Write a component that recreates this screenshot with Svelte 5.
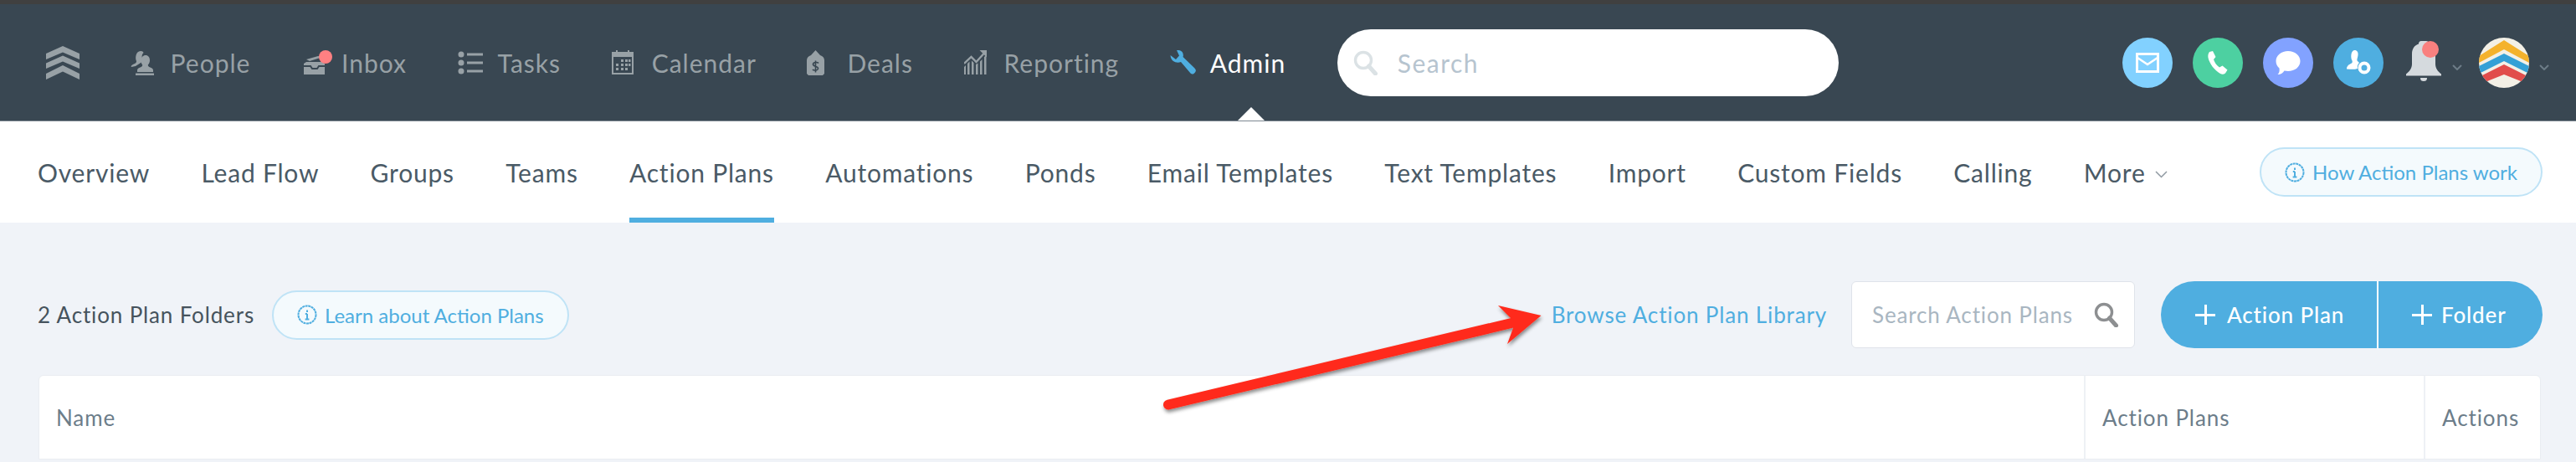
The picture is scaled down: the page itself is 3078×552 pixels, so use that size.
<script>
  const navItems = [
    { id: "people", label: "People" },
    { id: "inbox", label: "Inbox" },
    { id: "tasks", label: "Tasks" },
    { id: "calendar", label: "Calendar" },
    { id: "deals", label: "Deals" },
    { id: "reporting", label: "Reporting" },
    { id: "admin", label: "Admin", active: true },
  ];
  const subItems = [
    "Overview",
    "Lead Flow",
    "Groups",
    "Teams",
    "Action Plans",
    "Automations",
    "Ponds",
    "Email Templates",
    "Text Templates",
    "Import",
    "Custom Fields",
    "Calling",
  ];
</script>

{#snippet info()}
  <svg class="info" viewBox="0 0 24 24" fill="none" stroke="currentColor">
    <circle cx="12" cy="12" r="10.5" stroke-width="2" stroke-dasharray="3 0.6" />
    <path d="M12 6.5v2.4M12 11v6.5M9.8 11H12M9.6 17.5h4.8" stroke-width="2" />
  </svg>
{/snippet}

{#snippet glass(color)}
  <svg viewBox="0 0 30 30" fill="none" stroke={color}>
    <circle cx="12" cy="12" r="9.5" stroke-width="3.4" />
    <path d="M18.5 19l8 9" stroke-width="5" stroke-linecap="round" />
  </svg>
{/snippet}

<div class="page">
  <div class="strip"></div>

  <header class="topnav">
    <svg class="logo" viewBox="0 0 40 40" fill="#98a1a6">
      <path d="M20 0l20 9v7L20 7.500 0 16V9z" />
      <path d="M20 11.500l20 9v6.500L20 18.500 0 27v-6.500z" />
      <path d="M20 23l20 10v7L20 30.500 0 40v-7z" />
    </svg>

    {#each navItems as item}
      <div class="nav-item" class:active={item.active}>
        <span class="nav-icon">
          {#if item.id === "people"}
            <svg width="28" height="30" viewBox="0 0 28 30" fill="#98a1a6">
              <path d="M9 2c3-2 6-1 6.500 1-2 1.500-2.500 5-1.500 8 .3 1.500 0 2.500-1 3.500L6 19l-5 1c-1-1 1-3 4-4 1.500-.6 2-1.500 2-3-1.500-3-1-8.500 2-11z" />
              <path d="M18 6c3 0 5 2.500 5 6 0 2.500-1 4.500-2.200 5.500 0 1.500.7 2.300 2.700 3 2.500.8 3.500 2 3.500 3.500v2H8v-2c0-1.500 1-2.700 3.500-3.500 2-.7 2.700-1.500 2.700-3C13 16.500 12.500 14.500 12.500 12c0-3.500 2.500-6 5.500-6z" />
              <rect x="6" y="27.500" width="22" height="2.500" />
            </svg>
          {:else if item.id === "inbox"}
            <svg width="40" height="32" viewBox="0 0 40 32">
              <path d="M6 12l14-4 6 1-16 5z M3 17l3-2h19l3 2v13H3z" fill="#98a1a6" />
              <path d="M3 20h8l2 3h6l2-3h7" stroke="#394752" stroke-width="2" fill="none" />
              <circle cx="29" cy="9" r="8" fill="#ff8082" />
            </svg>
          {:else if item.id === "tasks"}
            <svg width="30" height="28" viewBox="0 0 30 28" fill="#98a1a6">
              <circle cx="4" cy="4" r="3.500" />
              <circle cx="4" cy="14" r="3.500" />
              <circle cx="4" cy="24" r="3.500" />
              <rect x="11" y="2.500" width="19" height="3" />
              <rect x="11" y="12.500" width="19" height="3" />
              <rect x="11" y="22.500" width="19" height="3" />
            </svg>
          {:else if item.id === "calendar"}
            <svg width="26" height="29" viewBox="0 0 26 29">
              <path d="M0 2h5V0h2v2h12V0h2v2h5v27H0z" fill="#98a1a6" />
              <rect x="2" y="8" width="22" height="19" fill="#394752" />
              <path d="M11 11h3v3h-3zM16 11h3v3h-3zM20 11h2.500v3H20zM5 16h3v3H5zM11 16h3v3h-3zM16 16h3v3h-3zM20 16h2.500v3H20zM5 21h3v3H5zM11 21h3v3h-3zM16 21h3v3h-3z" fill="#98a1a6" />
            </svg>
          {:else if item.id === "deals"}
            <svg width="21" height="30" viewBox="0 0 21 30">
              <path d="M10.500 0L16 6c3 1 5 3 5 6v16l-2 2H2l-2-2V12c0-3 2-5 5-6z" fill="#98a1a6" />
              <path d="M14 15.500c-1-1.500-6-1.500-6.500 1-.5 3.500 6.500 2 6 5.500-.4 2.500-5.500 2.500-6.500 1M10.500 12.500v14" stroke="#394752" stroke-width="1.600" fill="none" />
            </svg>
          {:else if item.id === "reporting"}
            <svg width="27" height="29" viewBox="0 0 27 29" fill="#98a1a6">
              <path d="M0 20l2-2v11H0zM4 16l2.500-2.500V29H4zM9 12.500l2.500 2.500v14H9zM14 17l2.500-1.500V29H14zM19 13.500l2.500-2.500v18H19zM24 8l2.500-2v23H24z" />
              <path d="M0 16L8.500 8l6 6L23.500 4" stroke="#98a1a6" stroke-width="2.400" fill="none" />
              <path d="M18.500 0H27v8.500z" />
            </svg>
          {:else}
            <svg width="31" height="29" viewBox="0 0 31 29" fill="#4faee0">
              <path d="M8 0c5.500-1 9 3.500 7.500 8L29 21c2 2 2.500 3.500 1 5.500s-3.500 3-5.500 1L13 14c-4.500 2-12 0-12.500-8L7 11l4-4.500z" />
            </svg>
          {/if}
        </span>
        <span>{item.label}</span>
      </div>
    {/each}

    <div class="global-search">
      <span class="global-glass">{@render glass("#dbe2e5")}</span>
      <span>Search</span>
    </div>

    <div class="nav-right">
      <span class="circle mail">
        <svg width="28" height="24" viewBox="0 0 28 24" fill="none" stroke="#fff" stroke-width="3">
          <rect x="1.500" y="1.500" width="25" height="21" />
          <path d="M2 6l12 8 12-8" stroke-width="2.500" />
        </svg>
      </span>
      <span class="circle phone">
        <svg width="26" height="28" viewBox="0 0 26 28" fill="#fff">
          <path d="M3 1l4-1 3.500 7-2.500 3c1 3.500 3.500 7 7 9.500l3.500-2 6 5-2.500 4c-2 1.500-4 1.500-6 .5C9 23 3 15 1.500 8 1 5 1.500 3 3 1z" />
        </svg>
      </span>
      <span class="circle chat">
        <svg width="30" height="30" viewBox="0 0 30 30" fill="#fff">
          <path d="M15 1c8 0 14.500 5 14.500 12S23 25 15 25c-1.500 0-3-.2-4.500-.5C9 27 6.500 29 2.500 29c2-2 2.500-4.500 2-7.500C2 19.500.5 16.500.5 13 .5 6 7 1 15 1z" />
        </svg>
      </span>
      <span class="circle admin-dot">
        <svg width="30" height="30" viewBox="0 0 30 30" fill="#fff">
          <path d="M10.500 0c3 0 4.500 2.500 4 6-.3 3-1.500 4.500-1 6.500L16 15c-2 2-2.500 4.500-2 7-3 1-7 1-13 .5 0-4 3-5.500 6-7 1-1 1-2.500 0-4C5.500 7 6.500 0 10.500 0z" />
          <circle cx="22" cy="21" r="5.500" fill="none" stroke="#fff" stroke-width="4" />
        </svg>
      </span>
      <span class="bell">
        <svg width="48" height="48" viewBox="0 0 48 48">
          <path d="M24 0c2 0 3 1.500 3 3.500 5 1.500 8 6 8 12v12c0 5 3 9 7 12v2H0v-2c4-3 7-7 7-12V15.500c0-6 3-10.500 8-12C15 1.500 16 0 18 0z" transform="translate(3 0)" fill="#d5dade" />
          <path d="M20 44h8c0 3-1.500 4-4 4s-4-1-4-4z" fill="#d5dade" />
          <circle cx="32" cy="10" r="10" fill="#f9807f" />
        </svg>
      </span>
      <svg class="caret bell-caret" viewBox="0 0 12 7" fill="none" stroke="#6d7c87" stroke-width="2">
        <path d="M1 1l5 5 5-5" />
      </svg>
      <span class="avatar">
        <svg width="60" height="60" viewBox="0 0 60 60">
          <rect width="60" height="60" fill="#f3f0e6" />
          <path d="M0 22L30 3l30 19v8L30 14 0 30z" fill="#f4b22c" />
          <path d="M0 34L30 19l30 15v9L30 28 0 43z" fill="#33a0d6" />
          <path d="M0 47L30 32l30 15v9L30 44 0 56z" fill="#e14d4b" />
        </svg>
      </span>
      <svg class="caret" viewBox="0 0 12 7" fill="none" stroke="#6d7c87" stroke-width="2">
        <path d="M1 1l5 5 5-5" />
      </svg>
    </div>
  </header>

  <nav class="subnav">
    {#each subItems as item}
      <div class="sub-item" class:current={item === "Action Plans"}>{item}</div>
    {/each}
    <div class="sub-item more">
      More
      <svg viewBox="0 0 15 9" fill="none" stroke="#8f99a1" stroke-width="1.500">
        <path d="M1 1l6.500 6.500L14 1" />
      </svg>
    </div>
    <div class="pill how">{@render info()}How Action Plans work</div>
  </nav>

  <main class="content">
    <div class="toolbar">
      <span class="count">2 Action Plan Folders</span>
      <div class="pill learn">{@render info()}Learn about Action Plans</div>
      <span class="browse">Browse Action Plan Library</span>
      <div class="plan-search">
        <span>Search Action Plans</span>
        <span class="plan-glass">{@render glass("#8d8f91")}</span>
      </div>
      <div class="actions">
        <div class="add plan"><span class="plus"></span>Action Plan</div>
        <div class="add folder"><span class="plus"></span>Folder</div>
      </div>
    </div>

    <div class="table">
      <div class="cell">Name</div>
      <div class="cell">Action Plans</div>
      <div class="cell">Actions</div>
    </div>
  </main>

  <svg class="arrow" width="480" height="130" viewBox="1380 365 480 130">
    <defs>
      <filter id="arrow-shadow" x="-5%" y="-20%" width="110%" height="150%">
        <feDropShadow dx="1" dy="3" stdDeviation="2" flood-color="#000" flood-opacity="0.45" />
      </filter>
    </defs>
    <g filter="url(#arrow-shadow)" fill="#ff2c1b">
      <path d="M1396 483.500L1806 386" stroke="#ff2c1b" stroke-width="12" stroke-linecap="round" fill="none" />
      <path d="M1841.500 377L1790 365l15 15 3 12-7 19z" />
    </g>
  </svg>
</div>

<style>
  :global(body) {
    margin: 0;
    background: #f0f3f8;
  }
  .page {
    position: relative;
    height: 552px;
    overflow: hidden;
    font-family: Lato, "Liberation Sans", sans-serif;
    background: #f0f3f8;
  }
  .strip {
    height: 5px;
    background: #404040;
  }
  .topnav {
    display: flex;
    align-items: center;
    height: 140px;
    padding-left: 55px;
    box-sizing: border-box;
    background: #394752;
    color: #98a1a6;
    font-size: 30px;
    letter-spacing: 1px;
    border-bottom: 1px solid #7c8790;
    gap: 60.6px;
  }
  .logo {
    width: 40px;
    height: 40px;
    flex: none;
  }
  .nav-item {
    position: relative;
    display: flex;
    align-items: center;
    height: 100%;
  }
  .nav-icon {
    width: 48px;
    display: flex;
    align-items: center;
    flex: none;
  }
  .active {
    color: #fff;
  }
  .active::after {
    content: "";
    position: absolute;
    left: 81px;
    bottom: 0;
    border: 16px solid transparent;
    border-top: 0;
    border-bottom-color: #fff;
  }
  .global-search {
    display: flex;
    align-items: center;
    width: 599px;
    height: 80px;
    margin-left: 1px;
    padding-left: 19px;
    box-sizing: border-box;
    background: #fff;
    border-radius: 40px;
    color: #b6c4cf;
    font-size: 30px;
    letter-spacing: 1.5px;
    flex: none;
  }
  .global-glass {
    width: 53px;
    height: 30px;
    flex: none;
  }
  .global-glass svg,
  .plan-glass svg {
    display: block;
    width: 30px;
    height: 30px;
  }
  .nav-right {
    display: flex;
    align-items: center;
    margin-left: auto;
    padding-right: 32px;
    gap: 24px;
  }
  .circle,
  .avatar {
    width: 60px;
    height: 60px;
    border-radius: 50%;
    display: flex;
    align-items: center;
    justify-content: center;
    overflow: hidden;
    flex: none;
  }
  .mail { background: #82d1ff; }
  .phone { background: #4dd0a1; }
  .chat { background: #82a2ff; }
  .admin-dot { background: #4faee0; }
  .bell {
    height: 48px;
    margin-top: -3px;
    width: 48px;
    flex: none;
  }
  .caret {
    width: 12px;
    height: 7px;
    margin-left: -12px;
    margin-top: 12px;
    flex: none;
  }
  .bell-caret {
    margin-left: -14px;
    margin-right: -4px;
  }
  .subnav {
    display: flex;
    align-items: center;
    height: 121px;
    padding: 0 40px 0 45px;
    background: #fff;
    color: #4a5a66;
    font-size: 30px;
    letter-spacing: 0.8px;
    gap: 61.3px;
  }
  .sub-item {
    position: relative;
    display: flex;
    align-items: center;
    height: 100%;
    white-space: nowrap;
    gap: 11px;
  }
  .sub-item svg {
    width: 15px;
    height: 9px;
    margin-top: 6px;
  }
  .current::after {
    content: "";
    position: absolute;
    left: 0;
    right: 0;
    bottom: 0;
    height: 6px;
    background: #4faee0;
  }
  .pill {
    display: flex;
    align-items: center;
    height: 59px;
    box-sizing: border-box;
    border: 2px solid #bfe3f6;
    border-radius: 30px;
    background: #f4fafd;
    color: #4faee0;
    font-size: 24px;
    letter-spacing: 0;
    white-space: nowrap;
    gap: 9px;
  }
  .info {
    width: 24px;
    height: 24px;
    flex: none;
  }
  .how {
    margin-left: auto;
    padding: 0 28px;
  }
  .content {
    padding: 70px 40px 0 45px;
  }
  .toolbar {
    display: flex;
    align-items: center;
    height: 80px;
    margin-bottom: 32px;
    letter-spacing: 0.85px;
  }
  .count {
    color: #46535d;
    font-size: 26px;
    white-space: nowrap;
    margin-right: 21px;
  }
  .learn {
    padding: 0 28px;
  }
  .browse {
    margin-left: auto;
    color: #4faee0;
    font-size: 26px;
    white-space: nowrap;
    margin-right: 29px;
  }
  .plan-search {
    display: flex;
    align-items: center;
    justify-content: space-between;
    width: 339px;
    height: 80px;
    margin-right: 31px;
    padding: 0 18px 0 24px;
    box-sizing: border-box;
    background: #fff;
    border: 1px solid #dfe3ea;
    border-radius: 6px;
    color: #a9b6c1;
    font-size: 26px;
    white-space: nowrap;
  }
  .actions {
    display: flex;
    width: 456px;
    height: 80px;
    border-radius: 40px;
    overflow: hidden;
    background: #4faee0;
    color: #fff;
    font-size: 26px;
    font-weight: 500;
  }
  .add {
    display: flex;
    align-items: center;
    box-sizing: border-box;
    gap: 14px;
    white-space: nowrap;
  }
  .plan {
    width: 260px;
    padding-left: 41px;
    border-right: 2px solid #fff;
  }
  .folder {
    flex: 1;
    padding-left: 40px;
    gap: 11px;
  }
  .plus {
    position: relative;
    width: 24px;
    height: 24px;
    flex: none;
    background: linear-gradient(#fff, #fff) center / 100% 3px no-repeat,
      linear-gradient(#fff, #fff) center / 3px 100% no-repeat;
  }
  .table {
    display: grid;
    grid-template-columns: 2443px 406px 141px;
    height: 101px;
    margin: 0 2px 0 1px;
    box-sizing: border-box;
    background: #fff;
    border: 1px solid #eaedf2;
    border-radius: 6px 6px 0 0;
    color: #6c7d8a;
    font-size: 26px;
    letter-spacing: 0.9px;
  }
  .cell {
    display: flex;
    align-items: center;
    padding: 0 0 0 20px;
    border-left: 2px solid #eef1f5;
    box-sizing: border-box;
  }
  .cell:first-child {
    border-left: 0;
  }
  .arrow {
    position: absolute;
    left: 1380px;
    top: 365px;
    overflow: visible;
  }
</style>
